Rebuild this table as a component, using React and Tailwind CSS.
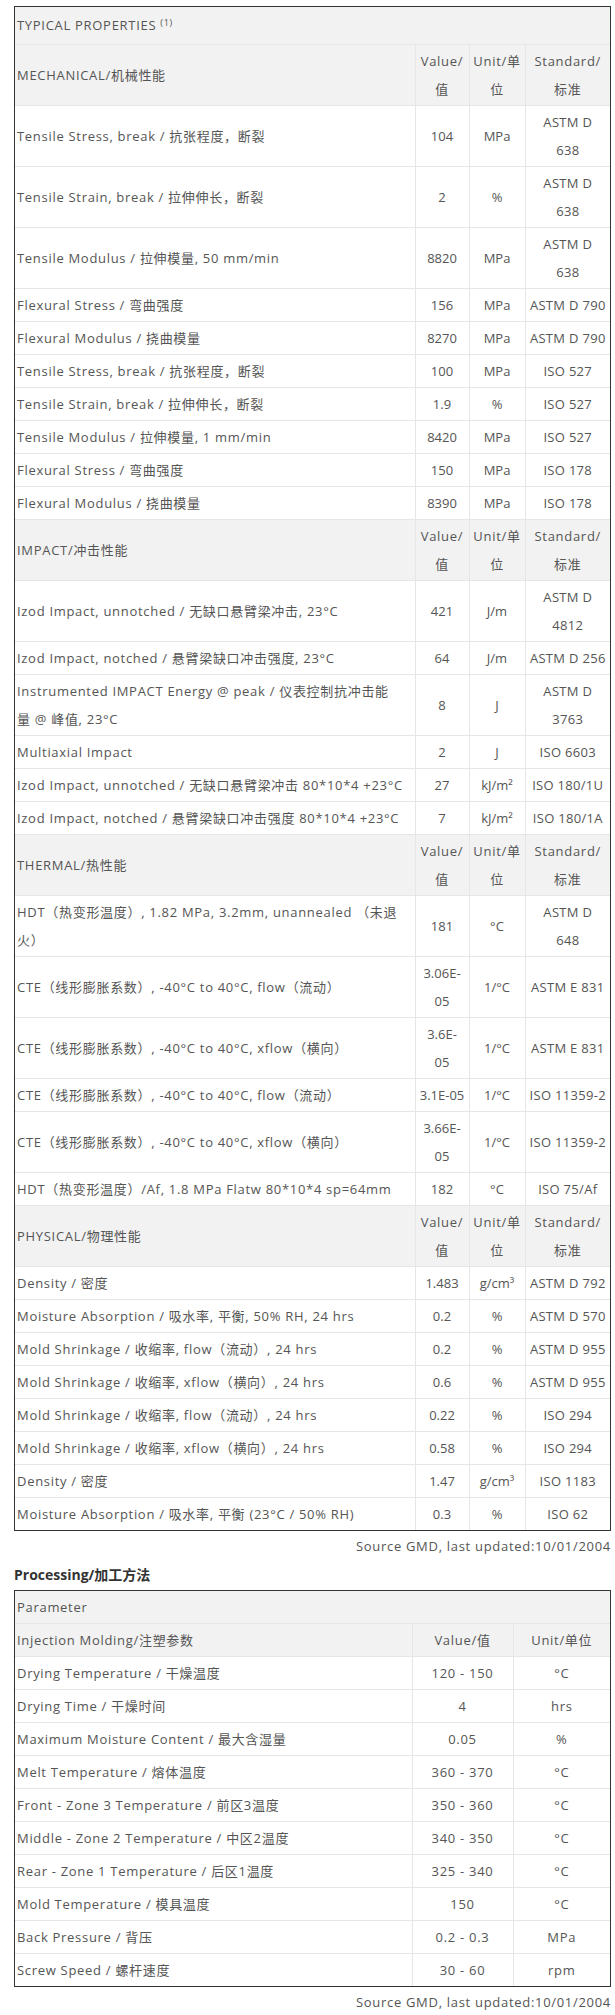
import React from "react";

const font = { fontFamily: '"Open Sans", "Noto Sans CJK SC", sans-serif' };

const sections = [
  {
    title: "MECHANICAL/机械性能",
    rows: [
      ["Tensile Stress, break / 抗张程度，断裂", "104", "MPa", "ASTM D\n638"],
      ["Tensile Strain, break / 拉伸伸长，断裂", "2", "%", "ASTM D\n638"],
      ["Tensile Modulus / 拉伸模量, 50 mm/min", "8820", "MPa", "ASTM D\n638"],
      ["Flexural Stress / 弯曲强度", "156", "MPa", "ASTM D 790"],
      ["Flexural Modulus / 挠曲模量", "8270", "MPa", "ASTM D 790"],
      ["Tensile Stress, break / 抗张程度，断裂", "100", "MPa", "ISO 527"],
      ["Tensile Strain, break / 拉伸伸长，断裂", "1.9", "%", "ISO 527"],
      ["Tensile Modulus / 拉伸模量, 1 mm/min", "8420", "MPa", "ISO 527"],
      ["Flexural Stress / 弯曲强度", "150", "MPa", "ISO 178"],
      ["Flexural Modulus / 挠曲模量", "8390", "MPa", "ISO 178"],
    ],
  },
  {
    title: "IMPACT/冲击性能",
    rows: [
      ["Izod Impact, unnotched / 无缺口悬臂梁冲击, 23°C", "421", "J/m", "ASTM D\n4812"],
      ["Izod Impact, notched / 悬臂梁缺口冲击强度, 23°C", "64", "J/m", "ASTM D 256"],
      ["Instrumented IMPACT Energy @ peak / 仪表控制抗冲击能\n量 @ 峰值, 23°C", "8", "J", "ASTM D\n3763"],
      ["Multiaxial Impact", "2", "J", "ISO 6603"],
      ["Izod Impact, unnotched / 无缺口悬臂梁冲击 80*10*4 +23°C", "27", "kJ/m²", "ISO 180/1U"],
      ["Izod Impact, notched / 悬臂梁缺口冲击强度 80*10*4 +23°C", "7", "kJ/m²", "ISO 180/1A"],
    ],
  },
  {
    title: "THERMAL/热性能",
    rows: [
      ["HDT（热变形温度）, 1.82 MPa, 3.2mm, unannealed （未退\n火）", "181", "°C", "ASTM D\n648"],
      ["CTE（线形膨胀系数）, -40°C to 40°C, flow（流动）", "3.06E-\n05", "1/°C", "ASTM E 831"],
      ["CTE（线形膨胀系数）, -40°C to 40°C, xflow（横向）", "3.6E-\n05", "1/°C", "ASTM E 831"],
      ["CTE（线形膨胀系数）, -40°C to 40°C, flow（流动）", "3.1E-05", "1/°C", "ISO 11359-2"],
      ["CTE（线形膨胀系数）, -40°C to 40°C, xflow（横向）", "3.66E-\n05", "1/°C", "ISO 11359-2"],
      ["HDT（热变形温度）/Af, 1.8 MPa Flatw 80*10*4 sp=64mm", "182", "°C", "ISO 75/Af"],
    ],
  },
  {
    title: "PHYSICAL/物理性能",
    rows: [
      ["Density / 密度", "1.483", "g/cm³", "ASTM D 792"],
      ["Moisture Absorption / 吸水率, 平衡, 50% RH, 24 hrs", "0.2", "%", "ASTM D 570"],
      ["Mold Shrinkage / 收缩率, flow（流动）, 24 hrs", "0.2", "%", "ASTM D 955"],
      ["Mold Shrinkage / 收缩率, xflow（横向）, 24 hrs", "0.6", "%", "ASTM D 955"],
      ["Mold Shrinkage / 收缩率, flow（流动）, 24 hrs", "0.22", "%", "ISO 294"],
      ["Mold Shrinkage / 收缩率, xflow（横向）, 24 hrs", "0.58", "%", "ISO 294"],
      ["Density / 密度", "1.47", "g/cm³", "ISO 1183"],
      ["Moisture Absorption / 吸水率, 平衡 (23°C / 50% RH)", "0.3", "%", "ISO 62"],
    ],
  },
];

const processing = [
  ["Drying Temperature / 干燥温度", "120 - 150", "°C"],
  ["Drying Time / 干燥时间", "4", "hrs"],
  ["Maximum Moisture Content / 最大含湿量", "0.05", "%"],
  ["Melt Temperature / 熔体温度", "360 - 370", "°C"],
  ["Front - Zone 3 Temperature / 前区3温度", "350 - 360", "°C"],
  ["Middle - Zone 2 Temperature / 中区2温度", "340 - 350", "°C"],
  ["Rear - Zone 1 Temperature / 后区1温度", "325 - 340", "°C"],
  ["Mold Temperature / 模具温度", "150", "°C"],
  ["Back Pressure / 背压", "0.2 - 0.3", "MPa"],
  ["Screw Speed / 螺杆速度", "30 - 60", "rpm"],
];

function Lines({ text }) {
  const parts = text.split("\n");
  return parts.map((p, i) => (
    <React.Fragment key={i}>
      {p}
      {i < parts.length - 1 && <br />}
    </React.Fragment>
  ));
}

const cell = "border border-[#e6e6e6] px-[2px] py-[2px] align-middle";

function App() {
  return (
    <div className="min-h-screen bg-white pt-[6px] text-[13px] leading-[28px] tracking-[0.7px] text-[#555]" style={font}>
      <div className="ml-[14px] w-[597px] border border-[#333]">
        <table className="w-full table-fixed border-collapse border-hidden">
          <colgroup>
            <col className="w-[400px]" />
            <col className="w-[54px]" />
            <col className="w-[56px]" />
            <col className="w-[85px]" />
          </colgroup>
          <tbody>
            <tr className="h-[37px] bg-[#f2f2f2]">
              <td colSpan={4} className={cell + " text-left"}>
                TYPICAL PROPERTIES <sup className="text-[9px]">(1)</sup>
              </td>
            </tr>
            {sections.map((s) => (
              <React.Fragment key={s.title}>
                <tr className="bg-[#f2f2f2]">
                  <td className={cell + " text-left"}>{s.title}</td>
                  <td className={cell + " text-center whitespace-nowrap"}>Value/<br />值</td>
                  <td className={cell + " text-center whitespace-nowrap"}>Unit/单<br />位</td>
                  <td className={cell + " text-center whitespace-nowrap"}>Standard/<br />标准</td>
                </tr>
                {s.rows.map((r, i) => (
                  <tr key={i}>
                    <td className={cell + " text-left"}><Lines text={r[0]} /></td>
                    <td className={cell + " text-center whitespace-nowrap tracking-normal"}><Lines text={r[1]} /></td>
                    <td className={cell + " text-center whitespace-nowrap tracking-normal"}>{r[2]}</td>
                    <td className={cell + " text-center whitespace-nowrap tracking-[0.3px]"}><Lines text={r[3]} /></td>
                  </tr>
                ))}
              </React.Fragment>
            ))}
          </tbody>
        </table>
      </div>
      <div className="mr-[4px] mt-[1px] text-right">Source GMD, last updated:10/01/2004</div>

      <h3 className="ml-[14px] mt-[1px] mb-[1px] text-[14px] font-bold leading-[28px] tracking-normal text-[#333]">Processing/加工方法</h3>

      <div className="ml-[14px] w-[597px] border border-[#333]">
        <table className="w-full table-fixed border-collapse border-hidden">
          <colgroup>
            <col className="w-[397px]" />
            <col className="w-[101px]" />
            <col className="w-[97px]" />
          </colgroup>
          <tbody>
            <tr className="bg-[#f2f2f2]">
              <td colSpan={3} className={cell + " text-left"}>Parameter</td>
            </tr>
            <tr className="bg-[#f2f2f2]">
              <td className={cell + " text-left"}>Injection Molding/注塑参数</td>
              <td className={cell + " text-center"}>Value/值</td>
              <td className={cell + " text-center"}>Unit/单位</td>
            </tr>
            {processing.map((r, i) => (
              <tr key={i}>
                <td className={cell + " text-left"}>{r[0]}</td>
                <td className={cell + " text-center"}>{r[1]}</td>
                <td className={cell + " text-center"}>{r[2]}</td>
              </tr>
            ))}
          </tbody>
        </table>
      </div>
      <div className="mr-[4px] mt-[1px] text-right">Source GMD, last updated:10/01/2004</div>
    </div>
  );
}

export default App;
